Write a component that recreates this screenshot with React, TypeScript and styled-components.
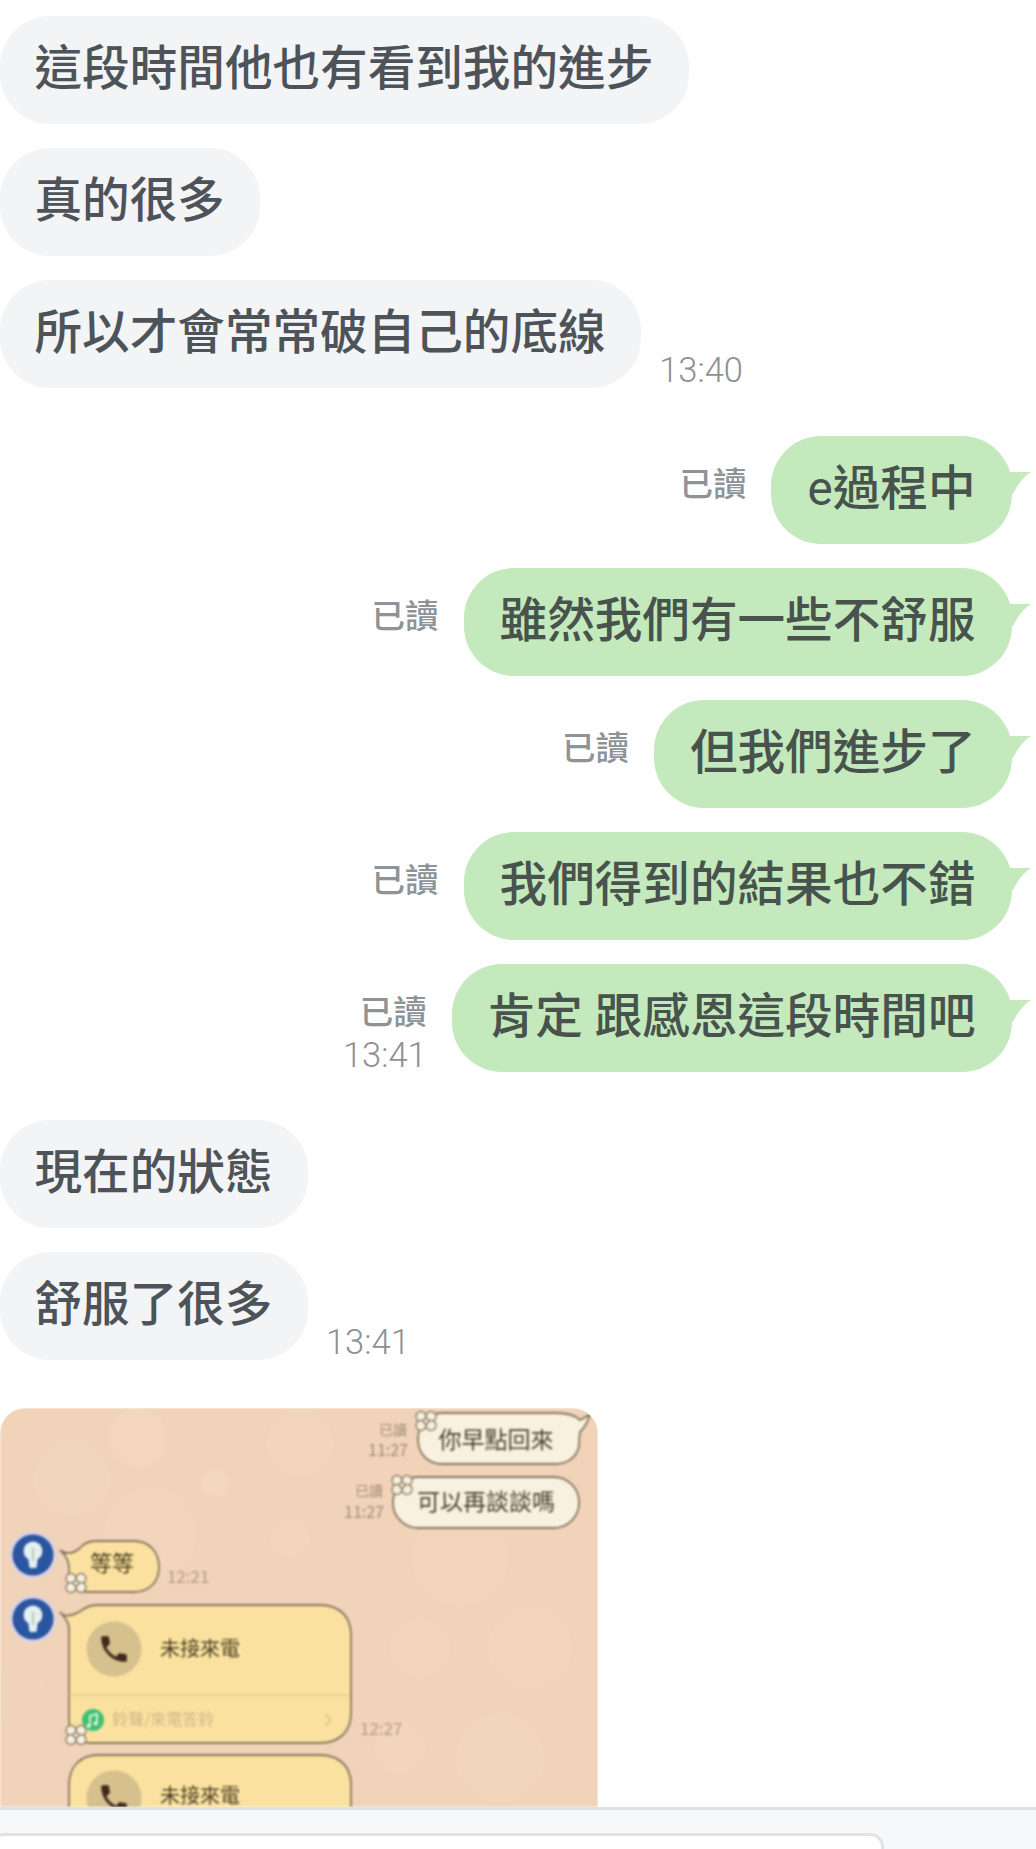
import styled, { createGlobalStyle } from "styled-components";

const GlobalStyle = createGlobalStyle`
  html, body {
    margin: 0;
    padding: 0;
    background: #ffffff;
  }
  * {
    box-sizing: border-box;
  }
`;

const FONT = `Roboto, "Noto Sans CJK TC", sans-serif`;

type Sent = { lead?: string; text: string; time?: string };

const sentMessages: Sent[] = [
  { lead: "e", text: "過程中" },
  { text: "雖然我們有一些不舒服" },
  { text: "但我們進步了" },
  { text: "我們得到的結果也不錯" },
  { text: "肯定 跟感恩這段時間吧", time: "13:41" },
];

// 背景の薄い丸
const blobs = [
  [72, 70, 38, 0.25],
  [138, 30, 30, 0.3],
  [150, 125, 46, 0.22],
  [215, 75, 14, 0.35],
  [300, 35, 34, 0.18],
  [290, 130, 20, 0.2],
  [460, 150, 48, 0.22],
  [530, 240, 42, 0.2],
  [420, 240, 30, 0.18],
  [500, 350, 44, 0.25],
  [400, 340, 26, 0.2],
  [20, 290, 30, 0.15],
];

const Flower = ({ x, y }: { x: number; y: number }) => (
  <g transform={`translate(${x} ${y})`} fill="#f6efdf" stroke="#8d7f66" strokeWidth="1.4">
    <circle cx="-5" cy="-4.5" r="5" />
    <circle cx="5" cy="-4.5" r="5" />
    <circle cx="-5" cy="4.5" r="5" />
    <circle cx="5" cy="4.5" r="5" />
    <circle cx="0" cy="0" r="2.6" />
  </g>
);

const Avatar = ({ y }: { y: number }) => (
  <g transform={`translate(33 ${y})`}>
    <circle r="24" fill="#ddd3df" />
    <circle r="20.5" fill="#2a55a0" />
    <circle cy="-4" r="9.5" fill="#e4f1f1" />
    <path d="M-5 2 L5 2 L3.5 13 L-3.5 13 Z" fill="#e4f1f1" />
    <line x1="0" y1="-7" x2="0" y2="6" stroke="#b8bda0" strokeWidth="1.6" />
  </g>
);

const CallIcon = ({ y }: { y: number }) => (
  <g>
    <circle cx="114" cy={y} r="27.5" fill="#d6c08d" />
    <path
      transform={`translate(97 ${y - 17}) scale(1.42)`}
      fill="#3f2a1c"
      d="M20 15.5c-1.25 0-2.45-.2-3.57-.57-.35-.11-.74-.03-1.02.24l-2.2 2.2c-2.83-1.44-5.15-3.75-6.59-6.59l2.2-2.21c.28-.26.36-.65.25-1C8.7 6.45 8.5 5.25 8.5 4c0-.55-.45-1-1-1H4c-.55 0-1 .45-1 1 0 9.39 7.61 17 17 17 .55 0 1-.45 1-1v-3.5c0-.55-.45-1-1-1z"
    />
  </g>
);

const ChatPicture = () => (
  <PictureSvg viewBox="0 0 598 399" width="598" height="399">
    <rect width="598" height="399" fill="#f1d3b9" />
    {blobs.map(([cx, cy, r, o]) => (
      <circle key={`${cx}-${cy}`} cx={cx} cy={cy} r={r} fill="#f8dfc8" opacity={o * 0.9} />
    ))}

    {/* 自分の吹き出し */}
    <path
      d="M442 5 H556 C566 5 574 6 580 12 C584 10 588 8 590 6 C588 14 584 20 580 24 C579 30 579 34 579 38 C577 50 566 56 556 56 H442 C428 56 418 46 418 31 C418 16 428 5 442 5 Z"
      fill="#f9f1df"
      stroke="#85775f"
      strokeWidth="1.8"
    />
    <Flower x={426} y={13} />
    <PicText x={496} y={30} $size={23} $color="#4a4030" textAnchor="middle" dominantBaseline="central">
      你早點回來
    </PicText>
    <PicText x={407} y={21} $size={14} $color="#a08e78" textAnchor="end" dominantBaseline="central">
      已讀
    </PicText>
    <PicText x={408} y={41} $size={16} $color="#a08e78" textAnchor="end" dominantBaseline="central">
      11:27
    </PicText>

    <rect x="393" y="69" width="186" height="51" rx="25" fill="#f9f1df" stroke="#85775f" strokeWidth="1.8" />
    <Flower x={402} y={77} />
    <PicText x={486} y={92} $size={23} $color="#4a4030" textAnchor="middle" dominantBaseline="central">
      可以再談談嗎
    </PicText>
    <PicText x={383} y={82} $size={14} $color="#a08e78" textAnchor="end" dominantBaseline="central">
      已讀
    </PicText>
    <PicText x={384} y={103} $size={16} $color="#a08e78" textAnchor="end" dominantBaseline="central">
      11:27
    </PicText>

    {/* 相手の吹き出し */}
    <Avatar y={147} />
    <path
      d="M60 142 C64 146 72 147 80 140 C84 135 90 133 96 133 H134 C150 133 159 145 159 159 C159 173 150 184 134 184 H88 C78 184 70 177 69 165 C70 157 68 149 60 142 Z"
      fill="#fbe19f"
      stroke="#85775f"
      strokeWidth="1.8"
    />
    <Flower x={76} y={175} />
    <PicText x={112} y={153} $size={22} $color="#4a3f20" textAnchor="middle" dominantBaseline="central">
      等等
    </PicText>
    <PicText x={167} y={167} $size={17} $color="#b19d85" dominantBaseline="central">
      12:21
    </PicText>

    <Avatar y={211} />
    <path
      d="M60 204 C64 209 72 209 82 202 C86 199 92 197 98 197 H320 C340 197 351 209 351 227 V305 C351 323 340 335 320 335 H90 C76 335 69 325 69 311 V219 C68 213 64 208 60 204 Z"
      fill="#fbe19f"
      stroke="#85775f"
      strokeWidth="1.8"
    />
    <CallIcon y={241} />
    <PicText x={160} y={239} $size={20} $color="#4a3f20" dominantBaseline="central">
      未接來電
    </PicText>
    <line x1="69" y1="287" x2="350" y2="287" stroke="#e6cc8b" strokeWidth="1.5" />
    <circle cx="93" cy="312" r="11" fill="#3fc074" />
    <path d="M90 318 V308 L97 306 V315" fill="none" stroke="#e5f5dd" strokeWidth="1.8" />
    <circle cx="88.5" cy="318" r="2" fill="#e5f5dd" />
    <circle cx="95.5" cy="315.5" r="2" fill="#e5f5dd" />
    <PicText x={112} y={310} $size={16} $color="#cdb98a" dominantBaseline="central">
      鈴聲/來電答鈴
    </PicText>
    <path d="M325 306 L331 312 L325 318" fill="none" stroke="#d9c691" strokeWidth="1.6" />
    <Flower x={76} y={327} />
    <PicText x={360} y={319} $size={17} $color="#b19d85" dominantBaseline="central">
      12:27
    </PicText>

    <path
      d="M69 420 V377 C69 359 80 347 98 347 H320 C340 347 351 359 351 377 V420 Z"
      fill="#fbe19f"
      stroke="#85775f"
      strokeWidth="1.8"
    />
    <CallIcon y={390} />
    <PicText x={160} y={386} $size={20} $color="#4a3f20" dominantBaseline="central">
      未接來電
    </PicText>
  </PictureSvg>
);

const App = () => {
  return (
    <Page>
      <GlobalStyle />
      <Thread>
        <Group>
          <ReceivedBubble>這段時間他也有看到我的進步</ReceivedBubble>
          <ReceivedBubble>真的很多</ReceivedBubble>
          <ReceivedRow>
            <ReceivedBubble>所以才會常常破自己的底線</ReceivedBubble>
            <ReceivedTime>13:40</ReceivedTime>
          </ReceivedRow>
        </Group>

        <Group>
          {sentMessages.map((message) => (
            <SentRow key={message.text}>
              <SentMeta>
                <ReadLabel>已讀</ReadLabel>
                {message.time && <SentTime>{message.time}</SentTime>}
              </SentMeta>
              <SentBubble>
                {message.lead && <LatinLead>{message.lead}</LatinLead>}
                {message.text}
              </SentBubble>
            </SentRow>
          ))}
        </Group>

        <Group>
          <ReceivedBubble>現在的狀態</ReceivedBubble>
          <ReceivedRow>
            <ReceivedBubble>舒服了很多</ReceivedBubble>
            <ReceivedTime>13:41</ReceivedTime>
          </ReceivedRow>
        </Group>

        <PictureFrame>
          <ChatPicture />
        </PictureFrame>
      </Thread>

      <Composer>
        <InputBox />
      </Composer>
    </Page>
  );
};

export default App;

const Page = styled.div`
  width: 1036px;
  height: 1849px;
  display: flex;
  flex-direction: column;
  overflow: hidden;
  background: #ffffff;
  font-family: ${FONT};
`;

const Thread = styled.div`
  flex: 1;
  min-height: 0;
  display: flex;
  flex-direction: column;
  gap: 48px;
  padding-top: 16px;
  overflow: hidden;
`;

const Group = styled.div`
  display: flex;
  flex-direction: column;
  align-items: flex-start;
  gap: 24px;
`;

const ReceivedRow = styled.div`
  display: flex;
  align-items: flex-end;
  gap: 18px;
`;

const Bubble = styled.div`
  height: 108px;
  display: flex;
  align-items: center;
  border-radius: 50px;
  font-size: 47.6px;
  font-weight: 500;
  line-height: 1;
  white-space: pre;
`;

const ReceivedBubble = styled(Bubble)`
  padding: 0 35.5px 0 34.5px;
  background: #f2f4f6;
  color: #4d5359;
`;

const ReceivedTime = styled.div`
  font-size: 34.5px;
  font-weight: 300;
  line-height: 36px;
  color: #8d9196;
`;

const SentRow = styled.div`
  align-self: flex-end;
  height: 108px;
  display: flex;
  gap: 25px;
  margin-right: 24px;
`;

const SentMeta = styled.div`
  display: flex;
  flex-direction: column;
  align-items: flex-end;
  padding-top: 29px;
`;

const ReadLabel = styled.div`
  font-size: 33.5px;
  font-weight: 500;
  line-height: 40px;
  color: #8e9398;
`;

const SentTime = styled.div`
  margin-top: 2px;
  font-size: 34.5px;
  font-weight: 300;
  line-height: 40px;
  color: #8d9196;
`;

// 右上のしっぽ付き
const SentBubble = styled(Bubble)`
  position: relative;
  padding: 0 36.5px 0 36px;
  background: #c4e9bd;
  color: #47534c;

  &::after {
    content: "";
    position: absolute;
    top: 36px;
    left: calc(100% - 2px);
    width: 21px;
    height: 24px;
    background: #c4e9bd;
    clip-path: path("M0 0 L21 0 Q10 7 3 22 L0 22 Z");
  }
`;

const LatinLead = styled.span`
  font-weight: 400;
`;

const PictureFrame = styled.div`
  width: 598px;
  height: 399px;
  flex-shrink: 0;
  overflow: hidden;
  border-radius: 26px 26px 0 0;
`;

const PictureSvg = styled.svg`
  display: block;
  filter: blur(0.9px);
`;

const PicText = styled.text<{ $size: number; $color: string }>`
  font-family: "Noto Sans CJK TC", sans-serif;
  font-size: ${(props) => props.$size}px;
  fill: ${(props) => props.$color};
`;

const Composer = styled.div`
  height: 42px;
  flex-shrink: 0;
  padding-top: 23px;
  background: #f7f8fa;
  border-top: 3px solid #e0e1e3;
`;

const InputBox = styled.div`
  width: 894px;
  height: 30px;
  margin-left: -10px;
  background: #ffffff;
  border: 3px solid #e2e2e3;
  border-bottom: none;
  border-radius: 14px 14px 0 0;
`;
